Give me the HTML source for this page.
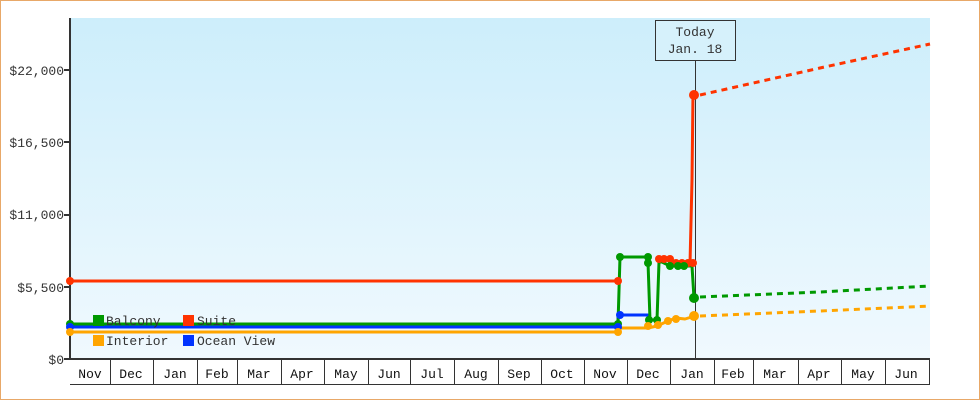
<!DOCTYPE html>
<html><head><style>
body{margin:0;width:980px;height:400px;overflow:hidden;background:#fff}
svg{display:block;font-family:"Liberation Mono","DejaVu Sans Mono",monospace}
</style></head><body>
<svg width="980" height="400" viewBox="0 0 980 400">
<defs><linearGradient id="g" x1="0" y1="0" x2="0" y2="1"><stop offset="0" stop-color="#cdeefb"/><stop offset="1" stop-color="#f0f9fe"/></linearGradient></defs>
<rect x="0.5" y="0.5" width="979" height="399" fill="#fff" stroke="#e8a868"/>
<rect x="71" y="18" width="859" height="341" fill="url(#g)"/>
<g font-size="13" fill="#333" text-anchor="end">
<text x="64" y="75">$22,000</text><text x="64" y="147">$16,500</text><text x="64" y="219">$11,000</text><text x="64" y="292">$5,500</text><text x="64" y="364">$0</text></g>
<g stroke="#333" stroke-width="2"><line x1="70" y1="18" x2="70" y2="360"/><line x1="64" y1="70" x2="70" y2="70"/><line x1="64" y1="142" x2="70" y2="142"/><line x1="64" y1="215" x2="70" y2="215"/><line x1="64" y1="287" x2="70" y2="287"/><line x1="64" y1="359" x2="930" y2="359"/></g>
<g stroke="#333" stroke-width="1"><line x1="70" y1="384.5" x2="930" y2="384.5"/>
<path d="M110.5 360V384M153.5 360V384M197.5 360V384M237.5 360V384M281.5 360V384M324.5 360V384M368.5 360V384M410.5 360V384M454.5 360V384M498.5 360V384M541.5 360V384M584.5 360V384M627.5 360V384M670.5 360V384M714.5 360V384M753.5 360V384M798.5 360V384M841.5 360V384M885.5 360V384M929.5 360V384"/></g>
<g font-size="13" fill="#111" text-anchor="middle">
<text x="90" y="378">Nov</text><text x="131" y="378">Dec</text><text x="175" y="378">Jan</text><text x="217" y="378">Feb</text><text x="259" y="378">Mar</text><text x="302" y="378">Apr</text><text x="346" y="378">May</text><text x="389" y="378">Jun</text><text x="432" y="378">Jul</text><text x="476" y="378">Aug</text><text x="519" y="378">Sep</text><text x="562" y="378">Oct</text><text x="605" y="378">Nov</text><text x="648" y="378">Dec</text><text x="692" y="378">Jan</text><text x="733" y="378">Feb</text><text x="775" y="378">Mar</text><text x="819" y="378">Apr</text><text x="863" y="378">May</text><text x="906" y="378">Jun</text></g>
<line x1="695.5" y1="58" x2="695.5" y2="359" stroke="#333"/>
<rect x="655.5" y="20.5" width="80" height="40" fill="#d6f1fb" stroke="#333"/>
<text x="695" y="36" font-size="13" fill="#333" text-anchor="middle">Today</text>
<text x="695" y="53" font-size="13" fill="#333" text-anchor="middle">Jan. 18</text>
<g fill="none" stroke-width="3" stroke-linejoin="round">
<path stroke="#ffa500" d="M70 332H618V328H648L657 326L668 321L676 318L685 319L695 316"/>
<path stroke="#0033ff" d="M70 327H618V315H648V320H658"/>
<path stroke="#009900" d="M70 324H618L620 257H648V262L650 320H657L659 262H662L670 266H690L692 266L694 298"/>
<path stroke="#ff3300" d="M70 281H618M656 260H670L676 262L690 264L692 180L693 94L696 96"/>
<path stroke="#ff3300" stroke-dasharray="6,5" d="M700 95L820 68L930 44"/>
<path stroke="#009900" stroke-dasharray="6,5" d="M700 297L820 292L930 286"/>
<path stroke="#ffa500" stroke-dasharray="6,5" d="M700 316L820 311L930 306"/>
</g>
<g fill="#ff3300"><circle cx="70" cy="281" r="4"/><circle cx="618" cy="281" r="4"/><circle cx="659" cy="259" r="4"/><circle cx="664" cy="259" r="4"/><circle cx="670" cy="259" r="4"/><circle cx="676" cy="263" r="4"/><circle cx="682" cy="263" r="4"/><circle cx="688" cy="263" r="4"/><circle cx="693" cy="263" r="4"/><circle cx="694" cy="95" r="5"/></g>
<g fill="#009900"><circle cx="70" cy="324" r="4"/><circle cx="618" cy="324" r="4"/><circle cx="620" cy="257" r="4"/><circle cx="648" cy="257" r="4"/><circle cx="648" cy="263" r="4"/><circle cx="649" cy="320" r="4"/><circle cx="657" cy="320" r="4"/><circle cx="670" cy="266" r="4"/><circle cx="678" cy="266" r="4"/><circle cx="684" cy="266" r="4"/><circle cx="694" cy="298" r="5"/></g>
<g fill="#0033ff"><circle cx="70" cy="327" r="4"/><circle cx="618" cy="327" r="4"/><circle cx="620" cy="315" r="4"/></g>
<g fill="#ffa500"><circle cx="70" cy="332" r="4"/><circle cx="618" cy="332" r="4"/><circle cx="648" cy="326" r="4"/><circle cx="658" cy="325" r="4"/><circle cx="668" cy="321" r="4"/><circle cx="676" cy="319" r="4"/><circle cx="694" cy="316" r="5"/></g>
<rect x="93" y="315" width="11" height="11" fill="#009900"/><rect x="183" y="315" width="11" height="11" fill="#ff3300"/>
<rect x="93" y="335" width="11" height="11" fill="#ffa500"/><rect x="183" y="335" width="11" height="11" fill="#0033ff"/>
<g font-size="13" fill="#333"><text x="106" y="325">Balcony</text><text x="197" y="325">Suite</text><text x="106" y="345">Interior</text><text x="197" y="345">Ocean View</text></g>
</svg>
</body></html>
